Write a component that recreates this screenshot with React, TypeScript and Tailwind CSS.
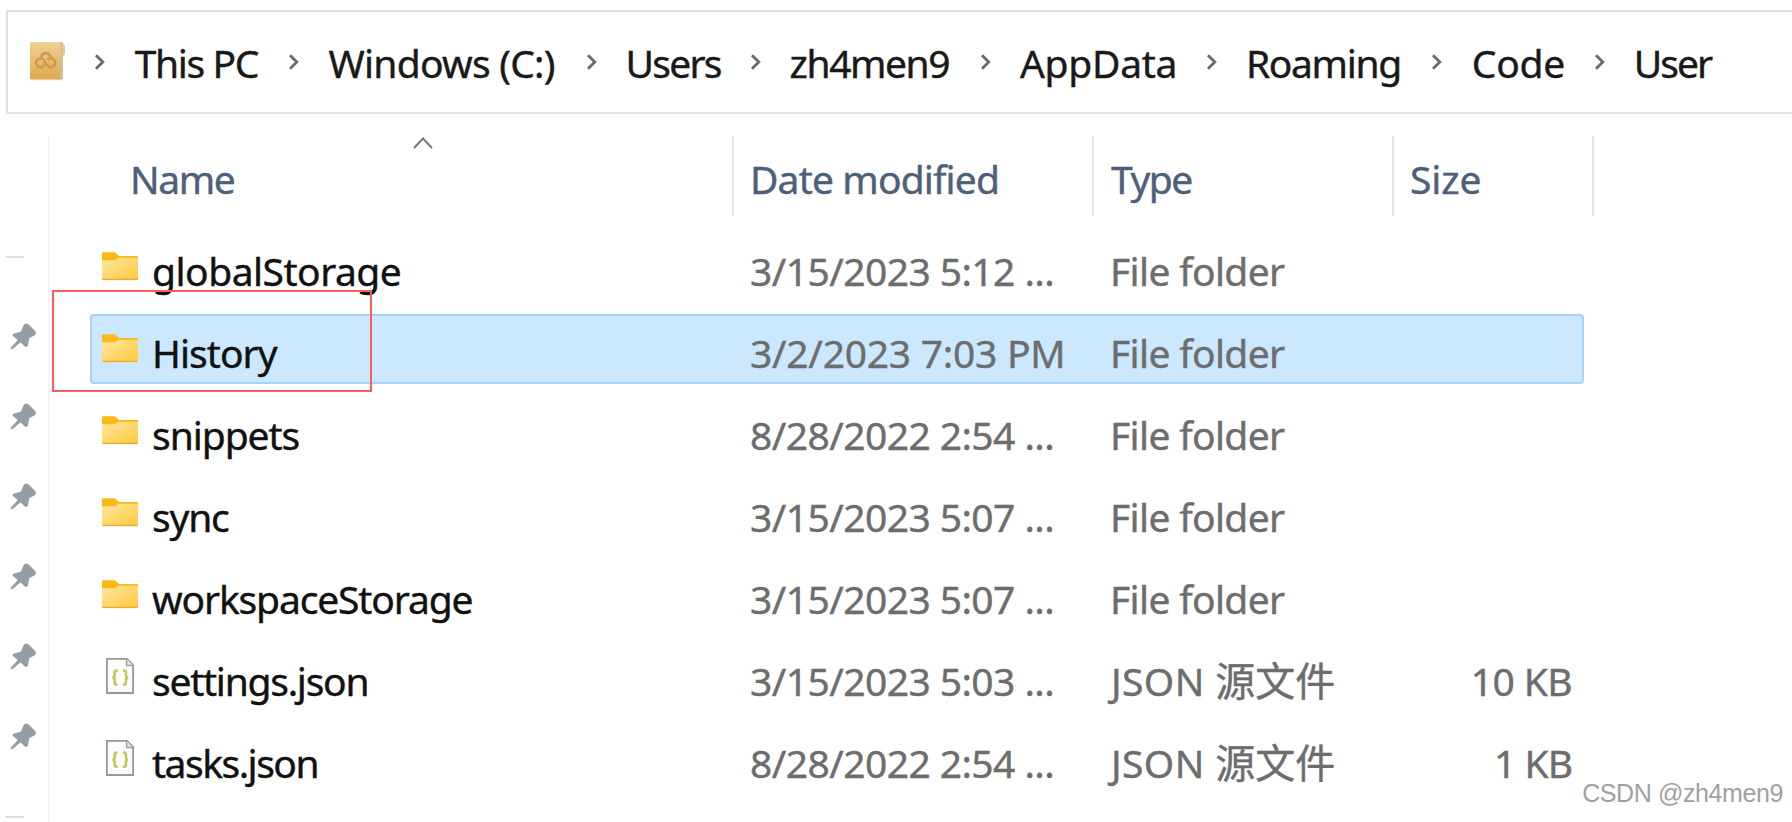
type Crumb = { label: string; cell: string; text: string };
type Entry = {
  name: string;
  nameClass: string;
  date: string;
  dateClass: string;
  kind: "folder" | "json";
  size?: string;
  sizeClass?: string;
  selected?: boolean;
};

const crumbs: Crumb[] = [
  { label: "This PC", cell: "w-[194px]", text: "ml-[30.2px] tracking-[-1.35px]" },
  { label: "Windows (C:)", cell: "w-[298.5px]", text: "ml-[30px] tracking-[-0.75px]" },
  { label: "Users", cell: "w-[164px]", text: "ml-[28.6px] tracking-[-1.8px]" },
  { label: "zh4men9", cell: "w-[230px]", text: "ml-[28.6px] tracking-[-1.45px]" },
  { label: "AppData", cell: "w-[225.5px]", text: "ml-[29px] tracking-[-0.3px]" },
  { label: "Roaming", cell: "w-[225.5px]", text: "ml-[29.4px] tracking-[-1.35px]" },
  { label: "Code", cell: "w-[162.5px]", text: "ml-[29.7px] tracking-[-0.2px]" },
  { label: "User", cell: "w-[150px]", text: "ml-[29.3px] tracking-[-2px]" },
];

const entries: Entry[] = [
  { name: "globalStorage", nameClass: "tracking-[-0.5px]", date: "3/15/2023 5:12 ...", dateClass: "tracking-[-0.56px]", kind: "folder" },
  { name: "History", nameClass: "tracking-[-0.95px]", date: "3/2/2023 7:03 PM", dateClass: "tracking-[-0.25px]", kind: "folder", selected: true },
  { name: "snippets", nameClass: "tracking-[-1.05px]", date: "8/28/2022 2:54 ...", dateClass: "tracking-[-0.56px]", kind: "folder" },
  { name: "sync", nameClass: "tracking-[-1.2px]", date: "3/15/2023 5:07 ...", dateClass: "tracking-[-0.56px]", kind: "folder" },
  { name: "workspaceStorage", nameClass: "tracking-[-1.15px]", date: "3/15/2023 5:07 ...", dateClass: "tracking-[-0.56px]", kind: "folder" },
  { name: "settings.json", nameClass: "tracking-[-1.25px]", date: "3/15/2023 5:03 ...", dateClass: "tracking-[-0.56px]", kind: "json", size: "10 KB", sizeClass: "tracking-[-0.6px]" },
  { name: "tasks.json", nameClass: "tracking-[-1.5px]", date: "8/28/2022 2:54 ...", dateClass: "tracking-[-0.56px]", kind: "json", size: "1 KB", sizeClass: "tracking-[-1px]" },
];

function Chevron() {
  return (
    <svg className="h-4 w-[10px] shrink-0" viewBox="0 0 10 16" fill="none" stroke="#6a6a6a" strokeWidth="2.8">
      <path d="M1 1.2 7.8 8 1 14.8" />
    </svg>
  );
}

function PackageIcon() {
  return (
    <svg className="h-[40px] w-[38px] shrink-0" viewBox="0 0 38 40">
      <defs>
        <linearGradient id="pkg" x1="0" y1="0" x2="0" y2="1">
          <stop offset="0" stopColor="#f0d096" />
          <stop offset="1" stopColor="#dfa94b" />
        </linearGradient>
      </defs>
      <path d="M32 2.5h2.5l1.5 2v9l-2 1.5h-2z" fill="#e9c88d" />
      <path d="M2 38.5h31" stroke="#d8cdb8" strokeWidth="1.5" />
      <rect x="1" y="1" width="33" height="37" rx="1" fill="url(#pkg)" />
      <path d="M31.5 1.5H33q1 0 1 1V37h-2.5z" fill="#cfc0a0" />
      <g fill="none" stroke="#d09a4c" strokeWidth="2.6">
        <path d="M12.5 18.5a4.8 4.8 0 1 1 9 0" />
        <circle cx="11.5" cy="21.7" r="4.4" />
        <path d="M18.5 19a4.4 4.4 0 1 1 0 5.5l-3-3.5" />
      </g>
    </svg>
  );
}

function PinIcon() {
  return (
    <svg className="h-[27px] w-[27px]" viewBox="0 0 27 27" fill="#949ea4">
      <path d="M14 1.6Q16 -.4 18.3 1.3L25 7.8Q27.4 10.2 24.5 12.4L19.3 15 18 22Q17 24.8 15 23.6L10.6 19.6 2.6 26.1Q.2 26.9 1 24.4L7.6 17 2.9 13Q1.8 11.4 4 10.5L10.9 8.7Z" />
    </svg>
  );
}

function FolderIcon() {
  return (
    <svg className="h-[29px] w-9" viewBox="0 0 36 29">
      <defs>
        <linearGradient id="folder" x1="0" y1="0" x2="1" y2="1">
          <stop offset="0" stopColor="#ffe7a0" />
          <stop offset="1" stopColor="#ffc93c" />
        </linearGradient>
      </defs>
      <path d="M0 1.5Q0 .3 1.2.3H12q1.2 0 2 .9L17 4h18q1 0 1 1v5H0z" fill="#f9b916" />
      <path d="M0 8.3h12.3q1.2 0 2-.8l1.6-1.7H36v21.4q0 1-1 1H1q-1 0-1-1z" fill="url(#folder)" />
      <path d="M.4 27.4h35.2" stroke="#e7ac2e" strokeWidth="1.4" />
    </svg>
  );
}

function JsonIcon() {
  return (
    <svg className="ml-1 h-9 w-[28px]" viewBox="0 0 28 36" fill="none">
      <path d="M.9.9H21l6.1 6.2V35H.9z" fill="#fafbfb" stroke="#979999" strokeWidth="1.8" />
      <path d="M20.6.9v6.6h6.5" fill="#e3e4e4" stroke="#a2a4a4" strokeWidth="1.5" />
      <g stroke="#c3c858" strokeWidth="2.6">
        <path d="M11.6 12.6h-.9q-2 0-2 2v2.6q0 2.2-2.2 2.5 2.2.3 2.2 2.5v2.6q0 2 2 2h.9" />
        <path d="M17 12.6h.9q2 0 2 2v2.6q0 2.2 2.2 2.5-2.2.3-2.2 2.5v2.6q0 2-2 2H17" />
      </g>
    </svg>
  );
}

function AddressBar() {
  return (
    <nav className="mt-[10px] ml-[6px] flex h-[104px] shrink-0 items-center border-2 border-r-0 border-[#e1e1e1] pl-[21px]">
      <div className="pb-[3px]">
        <PackageIcon />
      </div>
      <div className="ml-[27.5px] flex text-[#191919]">
        {crumbs.map((c) => (
          <div key={c.label} className={`flex shrink-0 items-center ${c.cell}`}>
            <Chevron />
            <span className={`pt-[2px] leading-[60px] ${c.text}`}>{c.label}</span>
          </div>
        ))}
      </div>
    </nav>
  );
}

function Sidebar() {
  return (
    <aside className="flex w-[50px] shrink-0 flex-col border-r-2 border-[#f5f5f5] pt-[120px]">
      <div className="ml-[6px] h-[2px] w-[18px] bg-[#dcdcdc]" />
      <div className="mt-[65px] ml-[10px] flex flex-col gap-[53px]">
        {[0, 1, 2, 3, 4, 5].map((i) => (
          <PinIcon key={i} />
        ))}
      </div>
      <div className="mt-[66px] ml-[6px] h-[2px] w-[18px] bg-[#dcdcdc]" />
    </aside>
  );
}

function Row({ entry }: { entry: Entry }) {
  const box = entry.selected ? "border-[#a3d4fd] bg-[#cce8ff]" : "border-transparent";
  return (
    <div className={`flex h-[70px] w-[1494px] rounded-[4px] border-2 leading-[66px] text-[#6d6d6d] ${box}`}>
      <div className="flex w-[658px] pl-[10px] text-[#111111]">
        <div className={entry.kind === "folder" ? "w-[50px] pt-[18px]" : "w-[50px] pt-[14px]"}>
          {entry.kind === "folder" ? <FolderIcon /> : <JsonIcon />}
        </div>
        <span className={`pt-[4px] ${entry.nameClass}`}>{entry.name}</span>
      </div>
      <div className={`w-[358px] pt-[4px] whitespace-nowrap ${entry.dateClass}`}>{entry.date}</div>
      {entry.kind === "folder" ? (
        <div className="w-[300px] pt-[4px] pl-[2px] tracking-[-0.65px]">File folder</div>
      ) : (
        <div className="w-[300px] pt-[4px] pl-[3px] whitespace-nowrap">
          <span className="tracking-[0.4px]">JSON </span>
          <span className="font-['Noto_Sans_CJK_SC',sans-serif] text-[40px] leading-none">源文件</span>
        </div>
      )}
      <div className={`flex-1 pt-[4px] pr-[10px] text-right ${entry.sizeClass ?? ""}`}>{entry.size}</div>
    </div>
  );
}

function FileList() {
  return (
    <section className="flex flex-1 flex-col">
      <header className="relative flex h-20 leading-[80px] text-[#4c607a]">
        <div className="w-[684px] border-r-2 border-[#e5e5e5] pt-[3px] pl-[80px] tracking-[-1.4px]">Name</div>
        <div className="w-[360px] border-r-2 border-[#e5e5e5] pt-[3px] pl-[16px] tracking-[-0.85px]">Date modified</div>
        <div className="w-[300px] border-r-2 border-[#e5e5e5] pt-[3px] pl-[17px] tracking-[-1.5px]">Type</div>
        <div className="w-[200px] border-r-2 border-[#e5e5e5] pt-[3px] pl-[16px] tracking-[-0.1px]">Size</div>
        <svg className="absolute top-px left-[363px] h-3 w-5" viewBox="0 0 20 12" fill="none" stroke="#777777" strokeWidth="1.9">
          <path d="M1 11 10 1.5 19 11" />
        </svg>
      </header>
      <div className="mt-[16px] ml-[40px] flex flex-col gap-[12px]">
        {entries.map((e) => (
          <Row key={e.name} entry={e} />
        ))}
      </div>
    </section>
  );
}

export default function App() {
  return (
    <div className="relative flex h-[822px] w-[1792px] flex-col overflow-hidden bg-white font-['Noto_Sans','Noto_Sans_CJK_SC',sans-serif] text-[39px] [-webkit-text-stroke:0.4px]">
      <AddressBar />
      <main className="mt-[22px] flex flex-1">
        <Sidebar />
        <FileList />
      </main>
      <div className="absolute top-[290px] left-[52px] h-[102px] w-[320px] border-2 border-[#fb5d5d]" />
      <div className="absolute right-[9px] bottom-[12px] font-['Liberation_Sans',sans-serif] text-[25px] leading-[34px] tracking-[-0.4px] text-[#a0a0a0] [-webkit-text-stroke:0px]">
        CSDN @zh4men9
      </div>
    </div>
  );
}
